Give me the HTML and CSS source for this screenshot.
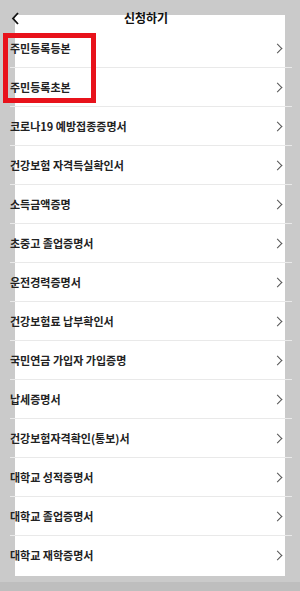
FILE: index.html
```html
<!DOCTYPE html>
<html>

<head>
  <meta charset="utf-8">
  <title>신청하기</title>
  <link rel="stylesheet" href="styles.css">
</head>

<body>
  <div class="header">
    <svg class="back" width="9" height="13" viewBox="0 0 9 13">
      <path d="M7 1 L2 6.5 L7 12" fill="none" stroke="#111" stroke-width="1.8"/>
    </svg>
    <div class="title">신청하기</div>
  </div>

  <!-- 목록 -->
  <div class="doc-list">
    <div class="doc-row"><span>주민등록등본</span><i class="chev"></i></div>
    <div class="doc-row"><span>주민등록초본</span><i class="chev"></i></div>
    <div class="doc-row"><span>코로나19 예방접종증명서</span><i class="chev"></i></div>
    <div class="doc-row"><span>건강보험 자격득실확인서</span><i class="chev"></i></div>
    <div class="doc-row"><span>소득금액증명</span><i class="chev"></i></div>
    <div class="doc-row"><span>초중고 졸업증명서</span><i class="chev"></i></div>
    <div class="doc-row"><span>운전경력증명서</span><i class="chev"></i></div>
    <div class="doc-row"><span>건강보험료 납부확인서</span><i class="chev"></i></div>
    <div class="doc-row"><span>국민연금 가입자 가입증명</span><i class="chev"></i></div>
    <div class="doc-row"><span>납세증명서</span><i class="chev"></i></div>
    <div class="doc-row"><span>건강보험자격확인(통보)서</span><i class="chev"></i></div>
    <div class="doc-row"><span>대학교 성적증명서</span><i class="chev"></i></div>
    <div class="doc-row"><span>대학교 졸업증명서</span><i class="chev"></i></div>
    <div class="doc-row last"><span>대학교 재학증명서</span><i class="chev"></i></div>
  </div>

  <div class="highlight"></div>
</body>

</html>
```

FILE: styles.css
```css
html,
body {
  margin: 0;
  height: 591px;
  overflow: hidden;
}

body {
  position: relative;
  font-family: "Noto Sans CJK KR", "Noto Sans", sans-serif;
  color: #1a1a1a;
  background:
    linear-gradient(#bebebe, #bebebe) 0 582px / 300px 9px no-repeat,
    linear-gradient(#fff, #fff) 15px 15px / 270px 561px no-repeat,
    #cacaca;
}

.header {
  height: 29px;
  display: flex;
  align-items: flex-start;
  padding-left: 11px;
}

.back {
  margin-top: 12px;
}

.title {
  flex: 1;
  text-align: center;
  font-size: 12px;
  font-weight: 700;
  line-height: 12px;
  margin-top: 12px;
  padding-right: 28px;
  color: #111;
}

.doc-list {
  width: 282px;
  margin-left: 10px;
}

.doc-row {
  height: 38px;
  border-bottom: 1px solid #e9e9e9;
  display: flex;
  align-items: center;
  justify-content: space-between;
  font-size: 11px;
  font-weight: 700;
  color: #222;
}

.doc-row.last {
  border-bottom: none;
}

.chev {
  width: 6px;
  height: 6px;
  border-top: 1px solid #555;
  border-right: 1px solid #555;
  transform: rotate(45deg);
  margin-right: 11px;
  margin-top: 1px;
}

.highlight {
  position: absolute;
  left: 3px;
  top: 33px;
  width: 83px;
  height: 60px;
  border: 5px solid #e8121b;
}
```
